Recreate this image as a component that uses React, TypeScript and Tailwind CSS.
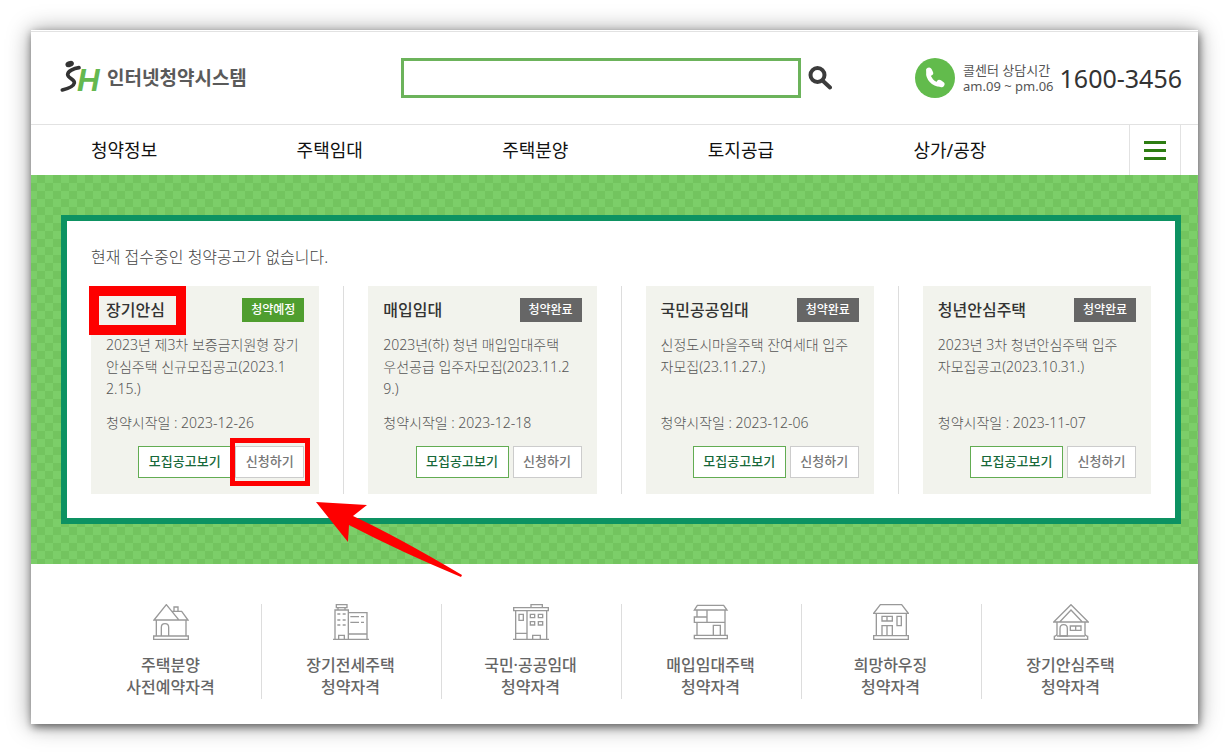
import { Fragment } from 'react'
import type { ReactNode } from 'react'

interface Notice {
  name: string
  status: 'upcoming' | 'closed'
  description: string
  startDate: string
  highlighted?: boolean
}

interface Guide {
  title: string
  icon: ReactNode
}

const menus = ['청약정보', '주택임대', '주택분양', '토지공급', '상가/공장']

const notices: Notice[] = [
  {
    name: '장기안심',
    status: 'upcoming',
    description: '2023년 제3차 보증금지원형 장기\n안심주택 신규모집공고(2023.1\n2.15.)',
    startDate: '2023-12-26',
    highlighted: true,
  },
  {
    name: '매입임대',
    status: 'closed',
    description: '2023년(하) 청년 매입임대주택\n우선공급 입주자모집(2023.11.2\n9.)',
    startDate: '2023-12-18',
  },
  {
    name: '국민공공임대',
    status: 'closed',
    description: '신정도시마을주택 잔여세대 입주\n자모집(23.11.27.)',
    startDate: '2023-12-06',
  },
  {
    name: '청년안심주택',
    status: 'closed',
    description: '2023년 3차 청년안심주택 입주\n자모집공고(2023.10.31.)',
    startDate: '2023-11-07',
  },
]

const guides: Guide[] = [
  {
    title: '주택분양\n사전예약자격',
    icon: (
      <>
        <path d="M2 96H106V106H2ZM10 48V96M99 48V96M3 48L40 2L78 48ZM57 22H86L105 48H78" />
        <path d="M63 22V9H75V22M25 96V70Q25 59 36 59Q47 59 47 70V96" />
      </>
    ),
  },
  {
    title: '장기전세주택\n청약자격',
    icon: (
      <>
        <path d="M0 106H108M6 106V18H46V106M10 2H42V11H10ZM15 11V18M36 11V18M17 106V94H34V106" />
        <path d="M46 26H102V106M46 90H102M52 38H78M84 38H93M52 55H78M84 55H93" />
        <path d="M13 30H22M29 30H38M13 48H22M29 48H38M13 63H22M29 63H38" />
      </>
    ),
  },
  {
    title: '국민·공공임대\n청약자격',
    icon: (
      <>
        <path d="M2 11H106V20H2ZM54 11V2H88V11M0 106H108M8 20V106M101 20V106M42 20V106M8 88H42" />
        <path d="M18 31H31V49H18ZM52 31H65V41H52ZM76 31H89V41H76ZM52 53H65V63H52ZM76 53H89V63H76ZM59 106V94H82V106" />
      </>
    ),
  },
  {
    title: '매입임대주택\n청약자격',
    icon: (
      <>
        <path d="M13 4H92L102 18H4ZM12 18V39M12 55V94M96 18V94M4 94H103V104H4Z" />
        <path d="M4 39H42V55H4ZM42 18V39M42 55H96M61 94V64H82V94" />
      </>
    ),
  },
  {
    title: '희망하우징\n청약자격',
    icon: (
      <>
        <path d="M22 2H86L106 28H2ZM10 28V95M100 28V95M2 95H106V106H2Z" />
        <path d="M27 37H58V51H27ZM42 37V51M72 37H85V65H72ZM27 95V65H58V95M42 65V95" />
      </>
    ),
  },
  {
    title: '장기안심주택\n청약자격',
    icon: (
      <>
        <path d="M54 2L106 54H2ZM20 54L54 18L88 54M12 54V90Q12 95 4 97V106H104V97Q96 95 96 90V54M12 96H96" />
        <path d="M21 96V74Q21 62 32 62Q43 62 43 74V96ZM52 66H84V79H52ZM68 66V79" />
      </>
    ),
  },
]

function Logo() {
  return (
    <a href="#" className="flex items-center gap-1 text-[19px] font-bold text-[#5a5a5a]">
      <svg
        viewBox="0 0 126 93"
        className="mb-1 h-[31px] w-[42px] overflow-visible"
        fill="none"
        aria-label="SH"
      >
        <ellipse cx="26" cy="9" rx="13" ry="9" transform="rotate(-20 26 9)" fill="#333" />
        <path
          d="M54 20C38 22 20 31 20 41C21 52 42 56 40 66C38 77 20 83 4 87"
          stroke="#333"
          strokeWidth="11"
          strokeLinecap="round"
          strokeLinejoin="round"
        />
        <text
          x="48"
          y="90"
          fill="#64b84f"
          fontFamily="Liberation Sans, sans-serif"
          fontStyle="italic"
          fontSize="94"
        >
          H
        </text>
      </svg>
      <span>인터넷청약시스템</span>
    </a>
  )
}

function CallCenter() {
  return (
    <div className="ml-auto flex shrink-0 items-center">
      <svg viewBox="0 0 120 120" className="size-10" fill="none" stroke="#fff" strokeLinecap="round">
        <circle cx="60" cy="60" r="60" fill="#62bb4c" stroke="none" />
        <path d="M40 42C38 60 54 80 76 80" strokeWidth="13" />
        <path d="M42 37L46 45M73 74L80 79" strokeWidth="17" />
      </svg>
      <p className="ml-2 text-[13px] leading-4 text-[#555]">
        콜센터 상담시간
        <br />
        am.09 ~ pm.06
      </p>
      <strong className="ml-1.5 text-[25px] leading-10 font-normal text-[#333]">1600-3456</strong>
    </div>
  )
}

function Header() {
  return (
    <header>
      <div className="mt-px flex h-[94px] items-center border-y border-[#e2e2e2] pr-4 pl-[30px]">
        <div className="w-[340px] shrink-0">
          <Logo />
        </div>
        <form className="flex items-center gap-[7px]">
          <input
            type="search"
            aria-label="검색어"
            className="h-10 w-[400px] border-3 border-[#6cb35b] bg-white px-3 outline-none"
          />
          <button type="button" aria-label="검색">
            <svg viewBox="0 0 24 24" className="size-6" fill="none" stroke="#3c3c3c">
              <circle cx="9.5" cy="9" r="7" strokeWidth="4" />
              <path d="M15 15L22 21.5" strokeWidth="4" strokeLinecap="round" />
            </svg>
          </button>
        </form>
        <CallCenter />
      </div>
      <nav className="flex h-[50px] pr-[17px] pl-[60px]">
        <ul className="mr-2.5 grid flex-1 grid-cols-5 items-center text-lg text-[#111]">
          {menus.map(menu => (
            <li key={menu}>
              <a href="#">{menu}</a>
            </li>
          ))}
        </ul>
        <button
          type="button"
          aria-label="전체메뉴"
          className="flex w-[52px] flex-col items-center justify-center gap-[5px] border-x border-[#e2e2e2]"
        >
          <span className="h-[3px] w-[22px] bg-[#2d7d12]" />
          <span className="h-[3px] w-[22px] bg-[#2d7d12]" />
          <span className="h-[3px] w-[22px] bg-[#2d7d12]" />
        </button>
      </nav>
    </header>
  )
}

function NoticeCard({ notice }: { notice: Notice }) {
  return (
    <article className="relative min-w-0 flex-1 bg-[#f2f3ed] px-[15px] pt-3 pb-4">
      <div className="flex items-center justify-between">
        <h2 className="text-base leading-6 font-medium text-[#333]">{notice.name}</h2>
        <span
          className={
            notice.status === 'upcoming'
              ? 'w-[62px] bg-[#4f9e2f] text-center text-xs leading-6 font-medium text-white'
              : 'w-[62px] bg-[#666] text-center text-xs leading-6 font-medium text-white'
          }
        >
          {notice.status === 'upcoming' ? '청약예정' : '청약완료'}
        </span>
      </div>
      <p className="mt-3 min-h-[66px] text-sm leading-[22px] font-light whitespace-pre text-[#555]">
        {notice.description}
      </p>
      <p className="mt-3 text-sm leading-[22px] font-light text-[#555]">청약시작일 : {notice.startDate}</p>
      <div className="mt-3 flex justify-end gap-1 text-[13px] font-medium">
        <button type="button" className="h-8 w-[93px] border border-[#62ac52] bg-white text-[#17693a]">
          모집공고보기
        </button>
        <button type="button" className="h-8 w-[69px] border border-[#ccc] bg-white text-[#777]">
          신청하기
        </button>
      </div>
      {notice.highlighted && (
        <>
          <span className="absolute top-0 -left-0.5 h-[49px] w-[97px] border-10 border-[#fe0000]" />
          <span className="absolute right-[9px] bottom-2 h-12 w-20 border-5 border-[#fe0000]" />
          <svg
            viewBox="0 0 146 76"
            className="absolute top-full left-full mt-2 -ml-[3px] h-[76px] w-[146px]"
            fill="#fe0000"
          >
            <path d="M0 0L51 3L37 14Q80 34 146 73L145 75Q85 50 33 23L32 40Z" />
          </svg>
        </>
      )}
    </article>
  )
}

function Notices() {
  return (
    <section className="bg-[#74c660] bg-[repeating-conic-gradient(#7cce69_0_25%,#73c45f_0_50%)] bg-[length:16px_16px] bg-[position:6px_0px] py-10 pr-[17px] pl-[30px]">
      <div className="border-6 border-[#0d9262] bg-white p-6">
        <p className="pb-[17px] text-base leading-6 font-light text-[#444]">
          현재 접수중인 청약공고가 없습니다.
        </p>
        <div className="flex gap-6">
          {notices.map((notice, index) => (
            <Fragment key={notice.name}>
              {index > 0 && <div className="w-px bg-[#ddd]" />}
              <NoticeCard notice={notice} />
            </Fragment>
          ))}
        </div>
      </div>
    </section>
  )
}

function Guides() {
  return (
    <ul className="grid grid-cols-6 pt-10 pr-9 pb-[25px] pl-[51px]">
      {guides.map(guide => (
        <li key={guide.title} className="border-r border-[#ddd] last:border-transparent">
          <a href="#" className="flex h-[95px] flex-col items-center pr-0.5">
            <svg viewBox="0 0 108 108" className="size-9" fill="none" stroke="#999" strokeWidth="4">
              {guide.icon}
            </svg>
            <span className="mt-3.5 text-center text-base leading-[22px] font-medium whitespace-pre text-[#666]">
              {guide.title}
            </span>
          </a>
        </li>
      ))}
    </ul>
  )
}

export default function App() {
  return (
    <div className="min-h-screen bg-white px-[31px] py-[30px] font-['Noto_Sans','Noto_Sans_CJK_KR',sans-serif]">
      <main className="flow-root bg-white shadow-[1px_3px_8px_rgba(0,0,0,0.5),0_1px_22px_rgba(0,0,0,0.4)]">
        <Header />
        <Notices />
        <Guides />
      </main>
    </div>
  )
}
